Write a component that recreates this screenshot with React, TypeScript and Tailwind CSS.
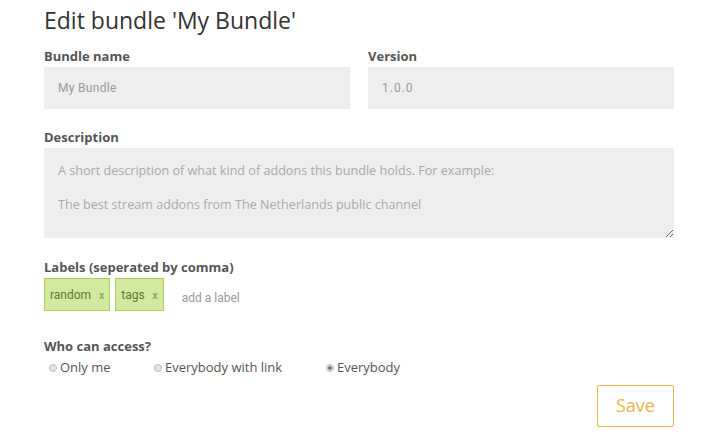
import { useState } from "react";

const sans = "font-['Open_Sans',sans-serif]";
const roboto = "font-['Roboto',sans-serif]";

function Radio({ label, checked, onClick }: { label: string; checked?: boolean; onClick: () => void }) {
  return (
    <button type="button" onClick={onClick} className="flex items-center gap-[3px] text-[13px] text-[#555]">
      <span className="w-[8px] h-[8px] rounded-full border border-[#bbb] bg-[#e4e4e4] flex items-center justify-center">
        {checked && <span className="w-[4px] h-[4px] rounded-full bg-[#777]" />}
      </span>
      {label}
    </button>
  );
}

export default function App() {
  const [access, setAccess] = useState("everybody");
  const tags = ["random", "tags"];

  return (
    <div className={`min-h-screen bg-white pl-[44px] pr-[27px] pt-[4px] ${sans}`}>
      <h1 className="text-[23px] leading-[32px] text-[#333]">Edit bundle 'My Bundle'</h1>

      <div className="mt-[11px] grid grid-cols-2 gap-[18px]">
        <div>
          <label className="block text-[13px] font-bold text-[#555] leading-[18px] mb-[2px]">Bundle name</label>
          <input
            defaultValue="My Bundle"
            className={`w-full h-[42px] bg-[#eee] px-[14px] text-[12px] tracking-[0.3px] text-[#999] outline-none ${roboto}`}
          />
        </div>
        <div>
          <label className="block text-[13px] font-bold text-[#555] leading-[18px] mb-[2px]">Version</label>
          <input
            defaultValue="1.0.0"
            className={`w-full h-[42px] bg-[#eee] px-[14px] text-[12px] tracking-[1px] text-[#999] outline-none ${roboto}`}
          />
        </div>
      </div>

      <label className="block mt-[19px] text-[13px] font-bold text-[#555] leading-[18px] mb-[2px]">Description</label>
      <textarea
        placeholder={"A short description of what kind of addons this bundle holds. For example:\n\nThe best stream addons from The Netherlands public channel"}
        className="block w-full h-[90px] bg-[#eee] px-[14px] py-[14px] text-[12.6px] leading-[17px] text-[#999] placeholder:text-[#aaa] outline-none font-['Open_Sans',sans-serif]"
      />

      <label className="block mt-[20px] text-[13px] font-bold text-[#555] leading-[18px] mb-[2px]">Labels (seperated by comma)</label>
      <div className="flex items-center">
        {tags.map((t) => (
          <span
            key={t}
            className={`mr-[5px] h-[33px] flex items-center gap-[8px] px-[5px] pt-[1px] bg-[#d3e9a2] border border-[#a9d25b] text-[#5b7c2c] text-[12px] ${roboto}`}
          >
            {t}
            <span className="text-[10px] font-bold text-[#8ab347]">x</span>
          </span>
        ))}
        <input
          placeholder="add a label"
          className={`ml-[13px] mt-[6px] w-[120px] text-[12px] text-[#999] placeholder:text-[#999] outline-none ${roboto}`}
        />
      </div>

      <label className="block mt-[26px] text-[13px] font-bold text-[#555] leading-[18px] mb-[3px]">Who can access?</label>
      <div className="flex items-center pl-[5px]">
        <div className="w-[105px]">
          <Radio label="Only me" checked={access === "me"} onClick={() => setAccess("me")} />
        </div>
        <div className="w-[172px]">
          <Radio label="Everybody with link" checked={access === "link"} onClick={() => setAccess("link")} />
        </div>
        <Radio label="Everybody" checked={access === "everybody"} onClick={() => setAccess("everybody")} />
      </div>

      <div className="flex justify-end mt-[7px]">
        <button className="w-[77px] h-[42px] border border-[#f0b24f] rounded-[2px] text-[18px] text-[#f0b24f]">
          Save
        </button>
      </div>
    </div>
  );
}
